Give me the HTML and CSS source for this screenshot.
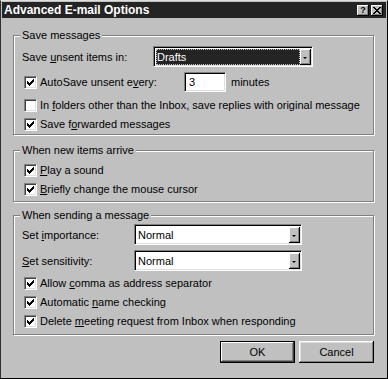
FILE: index.html
```html
<!DOCTYPE html>
<html lang="en">
<head>
    <meta charset="UTF-8">
    <title>Advanced E-mail Options</title>
    <link rel="stylesheet" href="styles.css">
</head>
<body>

    <div class="window">

        <div class="titlebar">
            <span class="title">Advanced E-mail Options</span>
            <div class="title-buttons">
                <button class="title-btn help">?</button>
                <button class="title-btn close">
                    <svg width="8" height="7" viewBox="0 0 8 7" shape-rendering="crispEdges">
                        <path d="M0 0h2v1h1v1h2V1h1V0h2v1H7v1H6v1H5v1h1v1h1v1h1v1H6V6H5V5H3v1H2v1H0V6h1V5h1V4h1V3H2V2H1V1H0z"/>
                    </svg>
                </button>
            </div>
        </div>

        <div class="content">

            <!-- Save messages -->
            <div class="group group-save">
                <div class="legend">Save messages</div>

                <div class="row row-combo">
                    <span class="field-label label-save">Save <u>u</u>nsent items in:</span>
                    <div class="combo combo-save focused">
                        <span class="combo-value">Drafts</span>
                        <span class="combo-arrow"></span>
                    </div>
                </div>

                <div class="row row-input">
                    <span class="check checked"></span>
                    <span class="check-label label-autosave">AutoSave unsent e<u>v</u>ery:</span>
                    <div class="textbox">3</div>
                    <span class="suffix">minutes</span>
                </div>

                <div class="row row-check first">
                    <span class="check"></span>
                    <span class="check-label">In <u>f</u>olders other than the Inbox, save replies with original message</span>
                </div>

                <div class="row row-check">
                    <span class="check checked"></span>
                    <span class="check-label">Save f<u>o</u>rwarded messages</span>
                </div>
            </div>

            <!-- When new items arrive -->
            <div class="group group-arrive">
                <div class="legend">When new items arrive</div>

                <div class="row row-check first">
                    <span class="check checked"></span>
                    <span class="check-label"><u>P</u>lay a sound</span>
                </div>

                <div class="row row-check">
                    <span class="check checked"></span>
                    <span class="check-label"><u>B</u>riefly change the mouse cursor</span>
                </div>
            </div>

            <!-- When sending a message -->
            <div class="group group-send">
                <div class="legend">When sending a message</div>

                <div class="row row-combo first">
                    <span class="field-label label-send">Set <u>i</u>mportance:</span>
                    <div class="combo combo-send">
                        <span class="combo-value">Normal</span>
                        <span class="combo-arrow"></span>
                    </div>
                </div>

                <div class="row row-combo">
                    <span class="field-label label-send"><u>S</u>et sensitivity:</span>
                    <div class="combo combo-send">
                        <span class="combo-value">Normal</span>
                        <span class="combo-arrow"></span>
                    </div>
                </div>

                <div class="row row-check first">
                    <span class="check checked"></span>
                    <span class="check-label">Allow <u>c</u>omma as address separator</span>
                </div>

                <div class="row row-check">
                    <span class="check checked"></span>
                    <span class="check-label">Automatic <u>n</u>ame checking</span>
                </div>

                <div class="row row-check">
                    <span class="check checked"></span>
                    <span class="check-label">Delete <u>m</u>eeting request from Inbox when responding</span>
                </div>
            </div>

            <div class="buttons">
                <button class="btn btn-default">OK</button>
                <button class="btn">Cancel</button>
            </div>

        </div>
    </div>

</body>
</html>
```

FILE: styles.css
```css
/* Reset */
* {
    margin: 0;
    padding: 0;
    box-sizing: border-box;
}

body {
    background: #c0c0c0;
    font-family: "Liberation Sans", Arial, sans-serif;
    font-size: 11px;
    color: #000;
}

/* Window frame */
.window {
    width: 388px;
    height: 379px;
    background: #c0c0c0;
    border: 1px solid;
    border-color: #dfdfdf #000 #000 #303030;
    padding: 1px;
    display: flex;
    flex-direction: column;
}

/* Title bar */
.titlebar {
    height: 16px;
    background: #242424;
    display: flex;
    align-items: center;
    justify-content: space-between;
    padding: 0 3px 0 2px;
}

.title {
    color: #fff;
    font-weight: bold;
    font-size: 12px;
    line-height: 16px;
}

.title-buttons {
    display: flex;
    gap: 2px;
}

.title-btn {
    width: 12px;
    height: 11px;
    border: none;
    background: #c0c0c0;
    box-shadow: inset -1px -1px #000, inset 1px 1px #fff, inset -2px -2px #808080;
    display: flex;
    align-items: center;
    justify-content: center;
    font-family: "Liberation Sans", Arial, sans-serif;
    font-weight: bold;
    font-size: 9px;
    line-height: 9px;
    color: #000;
}

.title-btn svg {
    display: block;
    fill: #000;
}

/* Dialog body */
.content {
    flex: 1;
    padding: 17px 12px 0 11px;
}

/* Group boxes */
.group {
    border: 1px solid #808080;
    box-shadow: inset 1px 1px #fff, 1px 1px #fff;
    padding: 0 8px;
}

.group-save {
    padding-bottom: 2px;
}

.group-arrive {
    margin-top: 15px;
    padding-bottom: 4px;
}

.group-send {
    margin-top: 13px;
    padding-bottom: 5px;
}

.legend {
    width: fit-content;
    margin: -8px 0 0 -2px;
    padding: 0 2px;
    background: #c0c0c0;
    line-height: 14px;
}

/* Rows */
.row {
    display: flex;
    align-items: center;
}

.row-combo {
    height: 21px;
    margin-top: 4px;
}

.group-send .row-combo {
    margin-top: 5px;
}

.group-send .row-combo.first {
    margin-top: 2px;
}

.row-input {
    height: 20px;
    margin-top: 5px;
}

.row-check {
    height: 16px;
    margin-top: 3px;
}

.row-check.first {
    margin-top: 5px;
}

.group-send .row-check.first {
    margin-top: 4px;
}

.field-label {
    white-space: nowrap;
}

.label-save {
    width: 131px;
}

.label-send {
    width: 112px;
}

/* Checkboxes */
.check {
    width: 13px;
    height: 13px;
    margin-left: 2px;
    flex-shrink: 0;
    background: #fff;
    border: 1px solid;
    border-color: #808080 #fff #fff #808080;
    box-shadow: inset 1px 1px #404040, inset -1px -1px #dfdfdf;
    position: relative;
}

.check.checked::after {
    content: "";
    position: absolute;
    left: 2px;
    top: 2px;
    width: 7px;
    height: 7px;
    background: url("data:image/svg+xml,%3Csvg xmlns='http://www.w3.org/2000/svg' width='7' height='7' viewBox='0 0 7 7' shape-rendering='crispEdges'%3E%3Cpath d='M0 2h1v3H0zM1 3h1v3H1zM2 4h1v3H2zM3 3h1v3H3zM4 2h1v3H4zM5 1h1v3H5zM6 0h1v3H6z'/%3E%3C/svg%3E") no-repeat;
}

.check-label {
    margin-left: 3px;
    white-space: nowrap;
}

.label-autosave {
    width: 144px;
}

/* Sunken fields */
.combo,
.textbox {
    height: 21px;
    background: #fff;
    border: 1px solid;
    border-color: #808080 #fff #fff #808080;
    box-shadow: inset 1px 1px #000, inset -1px -1px #dfdfdf;
}

.combo {
    display: flex;
    padding: 2px 1px 1px 2px;
}

.combo-save {
    width: 160px;
}

.combo-send {
    width: 168px;
}

.combo-value {
    flex: 1;
    display: flex;
    align-items: center;
    padding-left: 1px;
}

.combo.focused .combo-value {
    background: #242424;
    color: #fff;
    outline: 1px dotted #c0c0c0;
    outline-offset: -1px;
}

.combo-arrow {
    width: 11px;
    background: #c0c0c0;
    box-shadow: inset -1px -1px #000, inset 1px 1px #fff, inset -2px -2px #808080;
    display: flex;
    align-items: center;
    justify-content: center;
}

.combo-arrow::after {
    content: "";
    border-left: 2px solid transparent;
    border-right: 2px solid transparent;
    border-top: 2px solid #000;
    margin: 1px 1px 0 0;
}

.textbox {
    width: 42px;
    height: 20px;
    padding-left: 4px;
    line-height: 18px;
}

.suffix {
    margin-left: 5px;
}

/* OK / Cancel */
.buttons {
    display: flex;
    justify-content: flex-end;
    gap: 4px;
    margin-top: 6px;
}

.btn {
    width: 75px;
    height: 22px;
    border: none;
    background: #c0c0c0;
    font-family: "Liberation Sans", Arial, sans-serif;
    font-size: 11px;
    color: #000;
    box-shadow: inset -1px -1px #000, inset 1px 1px #fff, inset -2px -2px #808080, inset 2px 2px #dfdfdf;
}

.btn-default {
    border: 1px solid #000;
    box-shadow: inset -1px -1px #404040, inset 1px 1px #fff, inset -2px -2px #808080;
}
```
